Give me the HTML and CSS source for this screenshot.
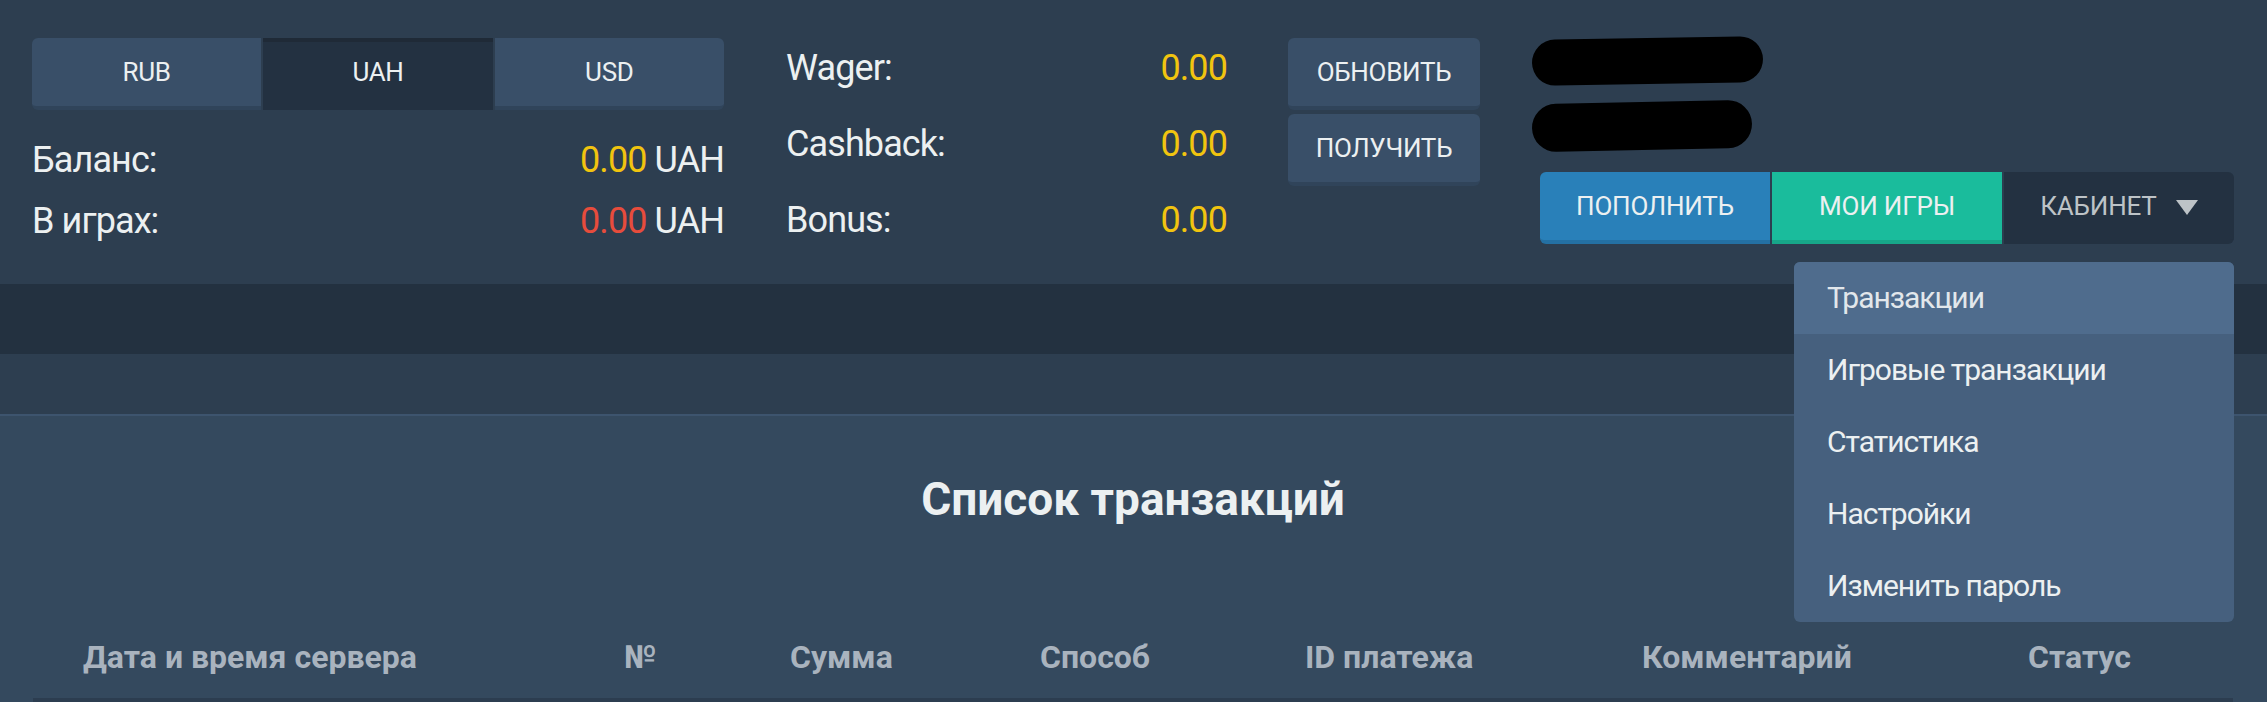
FILE: index.html
```html
<!DOCTYPE html>
<html lang="ru">
<head>
<meta charset="utf-8">
<title>Список транзакций</title>
<link rel="stylesheet" href="styles.css">
</head>
<body>
<header class="topbar">
  <section class="wallet">
    <div class="tabs">
      <button class="tab">RUB</button>
      <button class="tab tab-active">UAH</button>
      <button class="tab">USD</button>
    </div>
    <div class="wallet-rows">
      <div class="row"><span>Баланс:</span><span><span class="yellow">0.00</span> UAH</span></div>
      <div class="row"><span>В играх:</span><span><span class="red">0.00</span> UAH</span></div>
    </div>
  </section>
  <section class="bonus">
    <div class="row"><span>Wager:</span><span class="yellow">0.00</span></div>
    <div class="row"><span>Cashback:</span><span class="yellow">0.00</span></div>
    <div class="row"><span>Bonus:</span><span class="yellow">0.00</span></div>
  </section>
  <section class="actions">
    <button class="btn-plain">ОБНОВИТЬ</button>
    <button class="btn-plain">ПОЛУЧИТЬ</button>
  </section>
  <section class="account">
    <div class="redact redact-1"></div>
    <div class="redact redact-2"></div>
    <div class="group">
      <button class="gbtn gbtn-blue">ПОПОЛНИТЬ</button>
      <button class="gbtn gbtn-green">МОИ ИГРЫ</button>
      <button class="gbtn gbtn-dark">КАБИНЕТ
        <svg class="caret" width="22" height="15" viewBox="0 0 22 15"><polygon points="0,0 22,0 11,15" fill="#bdc3c7"/></svg>
      </button>
      <ul class="menu">
        <li class="menu-item menu-item-active">Транзакции</li>
        <li class="menu-item">Игровые транзакции</li>
        <li class="menu-item">Статистика</li>
        <li class="menu-item">Настройки</li>
        <li class="menu-item">Изменить пароль</li>
      </ul>
    </div>
  </section>
</header>
<div class="band"></div>
<div class="subbar"></div>
<main class="content">
  <h1 class="title">Список транзакций</h1>
  <div class="table">
    <div class="thead">
      <div class="th th-first">Дата и время сервера</div>
      <div class="th">№</div>
      <div class="th">Сумма</div>
      <div class="th">Способ</div>
      <div class="th">ID платежа</div>
      <div class="th">Комментарий</div>
      <div class="th">Статус</div>
    </div>
    <div class="tbody"></div>
  </div>
</main>
</body>
</html>
```

FILE: styles.css
```css
* { box-sizing: border-box; }
html, body { margin: 0; padding: 0; }
body {
  background: #34495e;
  font-family: Roboto, "Noto Sans", "Liberation Sans", sans-serif;
  color: #ecf0f1;
  overflow: hidden;
}
button {
  font-family: inherit;
  border: 0;
  margin: 0;
  cursor: pointer;
}

.topbar {
  display: flex;
  align-items: flex-start;
  height: 284px;
  padding: 30px 0 0 32px;
  background: #2d3e50;
}

.wallet { width: 692px; padding-top: 8px; }
.tabs { display: flex; gap: 2px; }
.tab {
  flex: 1;
  height: 72px;
  padding: 0;
  background: #394f68;
  border-bottom: 4px solid #30445a;
  color: #ecf0f1;
  font-size: 26px;
  letter-spacing: -0.3px;
}
.tab:first-child { border-radius: 6px 0 0 6px; }
.tab:last-child { border-radius: 0 6px 6px 0; }
.tab-active {
  background: #233141;
  border-bottom-color: #233141;
  box-shadow: inset 0 4px 0 #1f2a37;
}
.wallet-rows { margin-top: 20px; }
.row {
  display: flex;
  justify-content: space-between;
  font-size: 36px;
  line-height: 61px;
  letter-spacing: -0.9px;
}
.yellow { color: #f1c40f; }
.red { color: #e74c3c; }

.bonus { width: 441px; margin-left: 62px; }
.bonus .row { line-height: 76px; }

.actions {
  display: flex;
  flex-direction: column;
  gap: 4px;
  width: 192px;
  margin-left: 61px;
  padding-top: 8px;
}
.btn-plain {
  height: 72px;
  background: #394f68;
  border-bottom: 4px solid #30445a;
  border-radius: 6px;
  color: #ecf0f1;
  font-size: 26px;
  letter-spacing: -0.3px;
}

.account {
  margin-left: 52px;
  padding-top: 8px;
  width: 702px;
}
.redact {
  background: #000;
  border-radius: 24px;
}
.redact-1 { width: 231px; height: 46px; transform: rotate(-1deg); }
.redact-2 { width: 220px; height: 48px; margin-top: 18px; transform: rotate(-1.2deg); }

.group {
  position: relative;
  display: flex;
  gap: 2px;
  margin: 22px 0 0 8px;
}
.gbtn {
  width: 230px;
  height: 72px;
  color: #ecf0f1;
  font-size: 26px;
  letter-spacing: -0.2px;
  border-bottom: 4px solid transparent;
}
.gbtn-blue {
  background: #2980b9;
  border-bottom-color: #2470a3;
  border-radius: 6px 0 0 6px;
}
.gbtn-green {
  background: #1abc9c;
  border-bottom-color: #17a689;
}
.gbtn-dark {
  display: flex;
  align-items: center;
  justify-content: center;
  gap: 19px;
  background: #233141;
  border-bottom-color: #233141;
  border-radius: 0 6px 6px 0;
  color: #bdc3c7;
}
.caret { display: block; margin-top: 2px; }

.menu {
  position: absolute;
  top: calc(100% + 18px);
  right: 0;
  width: 440px;
  margin: 0;
  padding: 0;
  list-style: none;
  background: #46607e;
  border-radius: 6px;
  overflow: hidden;
  z-index: 5;
}
.menu-item {
  height: 72px;
  padding-left: 33px;
  font-size: 30px;
  line-height: 72px;
  letter-spacing: -1px;
  color: #ecf0f1;
}
.menu-item-active {
  background: #4f6c8d;
  color: #e2e7eb;
}

.band { height: 70px; background: #233140; }
.subbar {
  height: 62px;
  background: #2d3e50;
  border-bottom: 2px solid #3d546e;
}

.content { padding: 55px 34px 0 33px; }
.title {
  margin: 0;
  text-align: center;
  font-size: 46px;
  font-weight: 700;
  line-height: 56px;
  color: #ecf0f1;
}
.table { margin-top: 110px; }
.thead {
  display: grid;
  grid-template-columns: 591px 166px 250px 265px 337px 386px 1fr;
  padding-bottom: 21px;
}
.th {
  font-size: 32px;
  font-weight: 700;
  line-height: 40px;
  color: #a9b3be;
  white-space: nowrap;
}
.th-first { padding-left: 50px; }
.tbody {
  height: 60px;
  background: #2c3d50;
}
```
